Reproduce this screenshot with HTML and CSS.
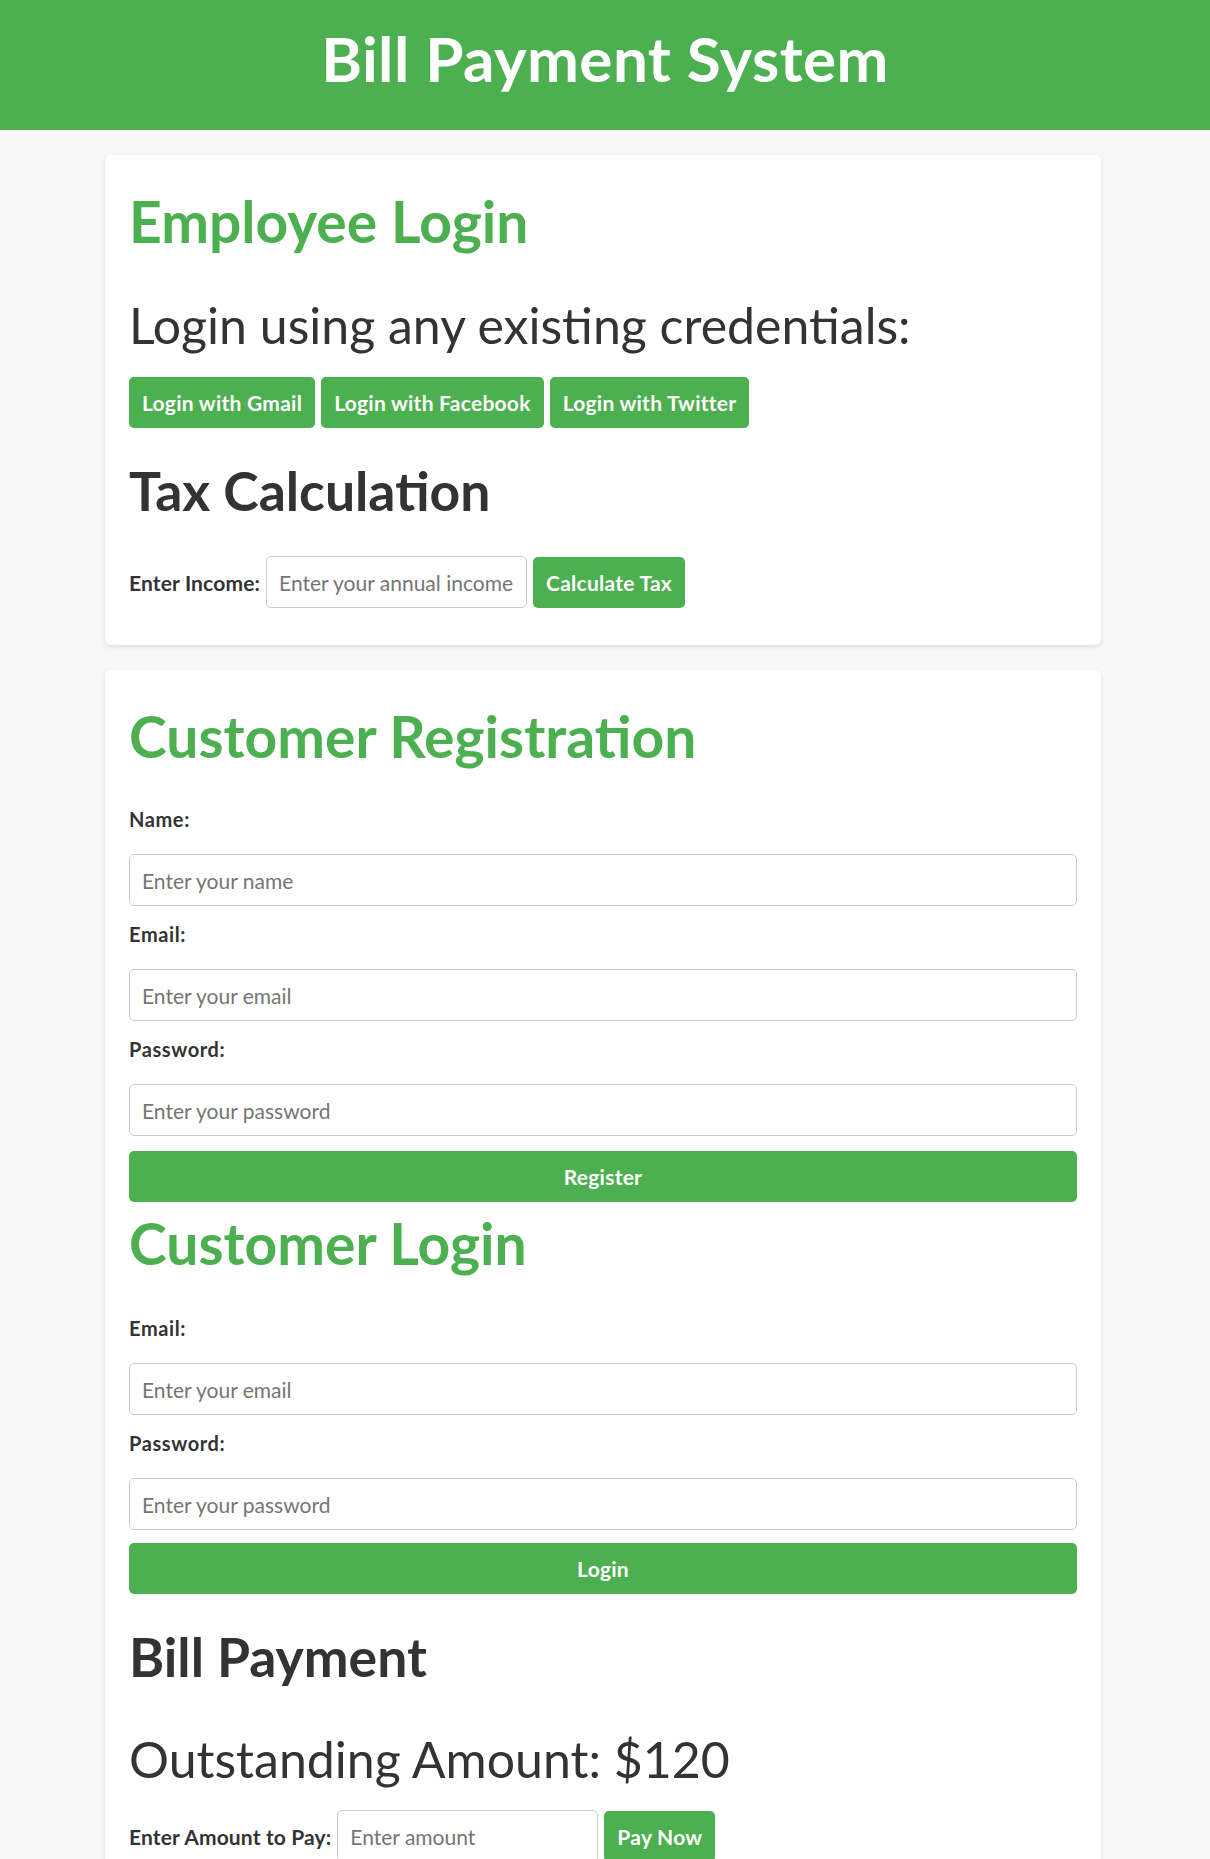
FILE: index.html
```html
<!DOCTYPE html>
<html lang="en">
<head>
<meta charset="utf-8">
<title>Bill Payment System</title>
<link rel="stylesheet" href="styles.css">
</head>
<body>
<header class="site-header">
  <h1 class="site-title">Bill Payment System</h1>
</header>
<main class="container">
  <section class="card">
    <h2 class="section-title">Employee Login</h2>
    <p class="lead">Login using any existing credentials:</p>
    <div class="social-buttons">
      <button class="btn" type="button">Login with Gmail</button>
      <button class="btn" type="button">Login with Facebook</button>
      <button class="btn" type="button">Login with Twitter</button>
    </div>
    <h3 class="sub-title">Tax Calculation</h3>
    <div class="inline-form">
      <label class="inline-label" for="income">Enter Income:</label>
      <input class="field field-inline" id="income" type="text" placeholder="Enter your annual income">
      <button class="btn" type="button">Calculate Tax</button>
    </div>
  </section>

  <section class="card">
    <h2 class="section-title">Customer Registration</h2>
    <form class="stack">
      <label class="block-label" for="reg-name">Name:</label>
      <input class="field" id="reg-name" type="text" placeholder="Enter your name">
      <label class="block-label" for="reg-email">Email:</label>
      <input class="field" id="reg-email" type="text" placeholder="Enter your email">
      <label class="block-label" for="reg-pass">Password:</label>
      <input class="field" id="reg-pass" type="password" placeholder="Enter your password">
      <button class="btn btn-block" type="button">Register</button>
    </form>

    <h2 class="section-title section-title-tight">Customer Login</h2>
    <form class="stack stack-login">
      <label class="block-label" for="log-email">Email:</label>
      <input class="field" id="log-email" type="text" placeholder="Enter your email">
      <label class="block-label" for="log-pass">Password:</label>
      <input class="field" id="log-pass" type="password" placeholder="Enter your password">
      <button class="btn btn-block" type="button">Login</button>
    </form>

    <h3 class="sub-title sub-title-pay">Bill Payment</h3>
    <p class="lead">Outstanding Amount: $120</p>
    <div class="inline-form inline-form-pay">
      <label class="inline-label" for="amount">Enter Amount to Pay:</label>
      <input class="field field-inline" id="amount" type="text" placeholder="Enter amount">
      <button class="btn" type="button">Pay Now</button>
    </div>
  </section>
</main>
</body>
</html>
```

FILE: styles.css
```css
* {
  box-sizing: border-box;
}

body {
  margin: 0;
  background: #f8f8f8;
  color: #333;
  font-family: "Lato", "Noto Sans", sans-serif;
}

.site-header {
  background: #4caf50;
  height: 130px;
  padding-top: 22px;
}

.site-title {
  margin: 0;
  color: #fff;
  text-align: center;
  font-size: 62px;
  line-height: 72px;
  letter-spacing: 0.4px;
  font-weight: 700;
}

.container {
  width: 996px;
  margin: 25px 0 0 calc(50% - 500px);
  display: flex;
  flex-direction: column;
  gap: 25px;
}

.card {
  background: #fff;
  border-radius: 6px;
  box-shadow: 0 2px 5px rgba(0, 0, 0, 0.1);
  padding: 24px;
  display: flex;
  flex-direction: column;
}

.section-title {
  margin: 9px 0 0;
  color: #4caf50;
  font-size: 57px;
  line-height: 67px;
  font-weight: 700;
}

.section-title-tight {
  margin-top: 8px;
}

.lead {
  margin: 41px 0 0;
  font-size: 50px;
  line-height: 59px;
  font-weight: 400;
  color: #333;
}

.sub-title {
  margin: 30px 0 0;
  font-size: 53.5px;
  line-height: 65px;
  font-weight: 700;
  color: #333;
}

.social-buttons {
  margin-top: 22px;
  display: flex;
  gap: 6px;
}

.btn {
  background: #4caf50;
  color: #fff;
  border: 0;
  border-radius: 5px;
  padding: 13px;
  font-family: inherit;
  font-size: 21px;
  line-height: 25px;
  letter-spacing: 0.25px;
  font-weight: 700;
  cursor: pointer;
}

.btn-block {
  width: 100%;
  margin-top: 15px;
}

.stack-login .btn-block {
  margin-top: 13px;
}

.inline-form {
  margin: 33px 0 13px;
  display: flex;
  align-items: center;
  gap: 6px;
}

.inline-form-pay {
  margin-top: 21px;
}

.inline-label {
  font-size: 21px;
  letter-spacing: 0.15px;
  font-weight: 700;
}

.field {
  display: block;
  width: 100%;
  height: 52px;
  padding: 0 12px;
  border: 1px solid #ccc;
  border-radius: 5px;
  font-family: inherit;
  font-size: 21px;
  color: #333;
  background: #fff;
}

.field::placeholder {
  color: #757575;
}

.field-inline {
  width: 261px;
}

.stack {
  margin-top: 21px;
  display: flex;
  flex-direction: column;
}

.stack-login {
  margin-top: 23px;
}

.block-label {
  margin: 17px 0 23px;
  font-size: 20px;
  line-height: 23px;
  letter-spacing: 0.6px;
  font-weight: 700;
}

.sub-title-pay {
  margin-top: 30px;
}
```
